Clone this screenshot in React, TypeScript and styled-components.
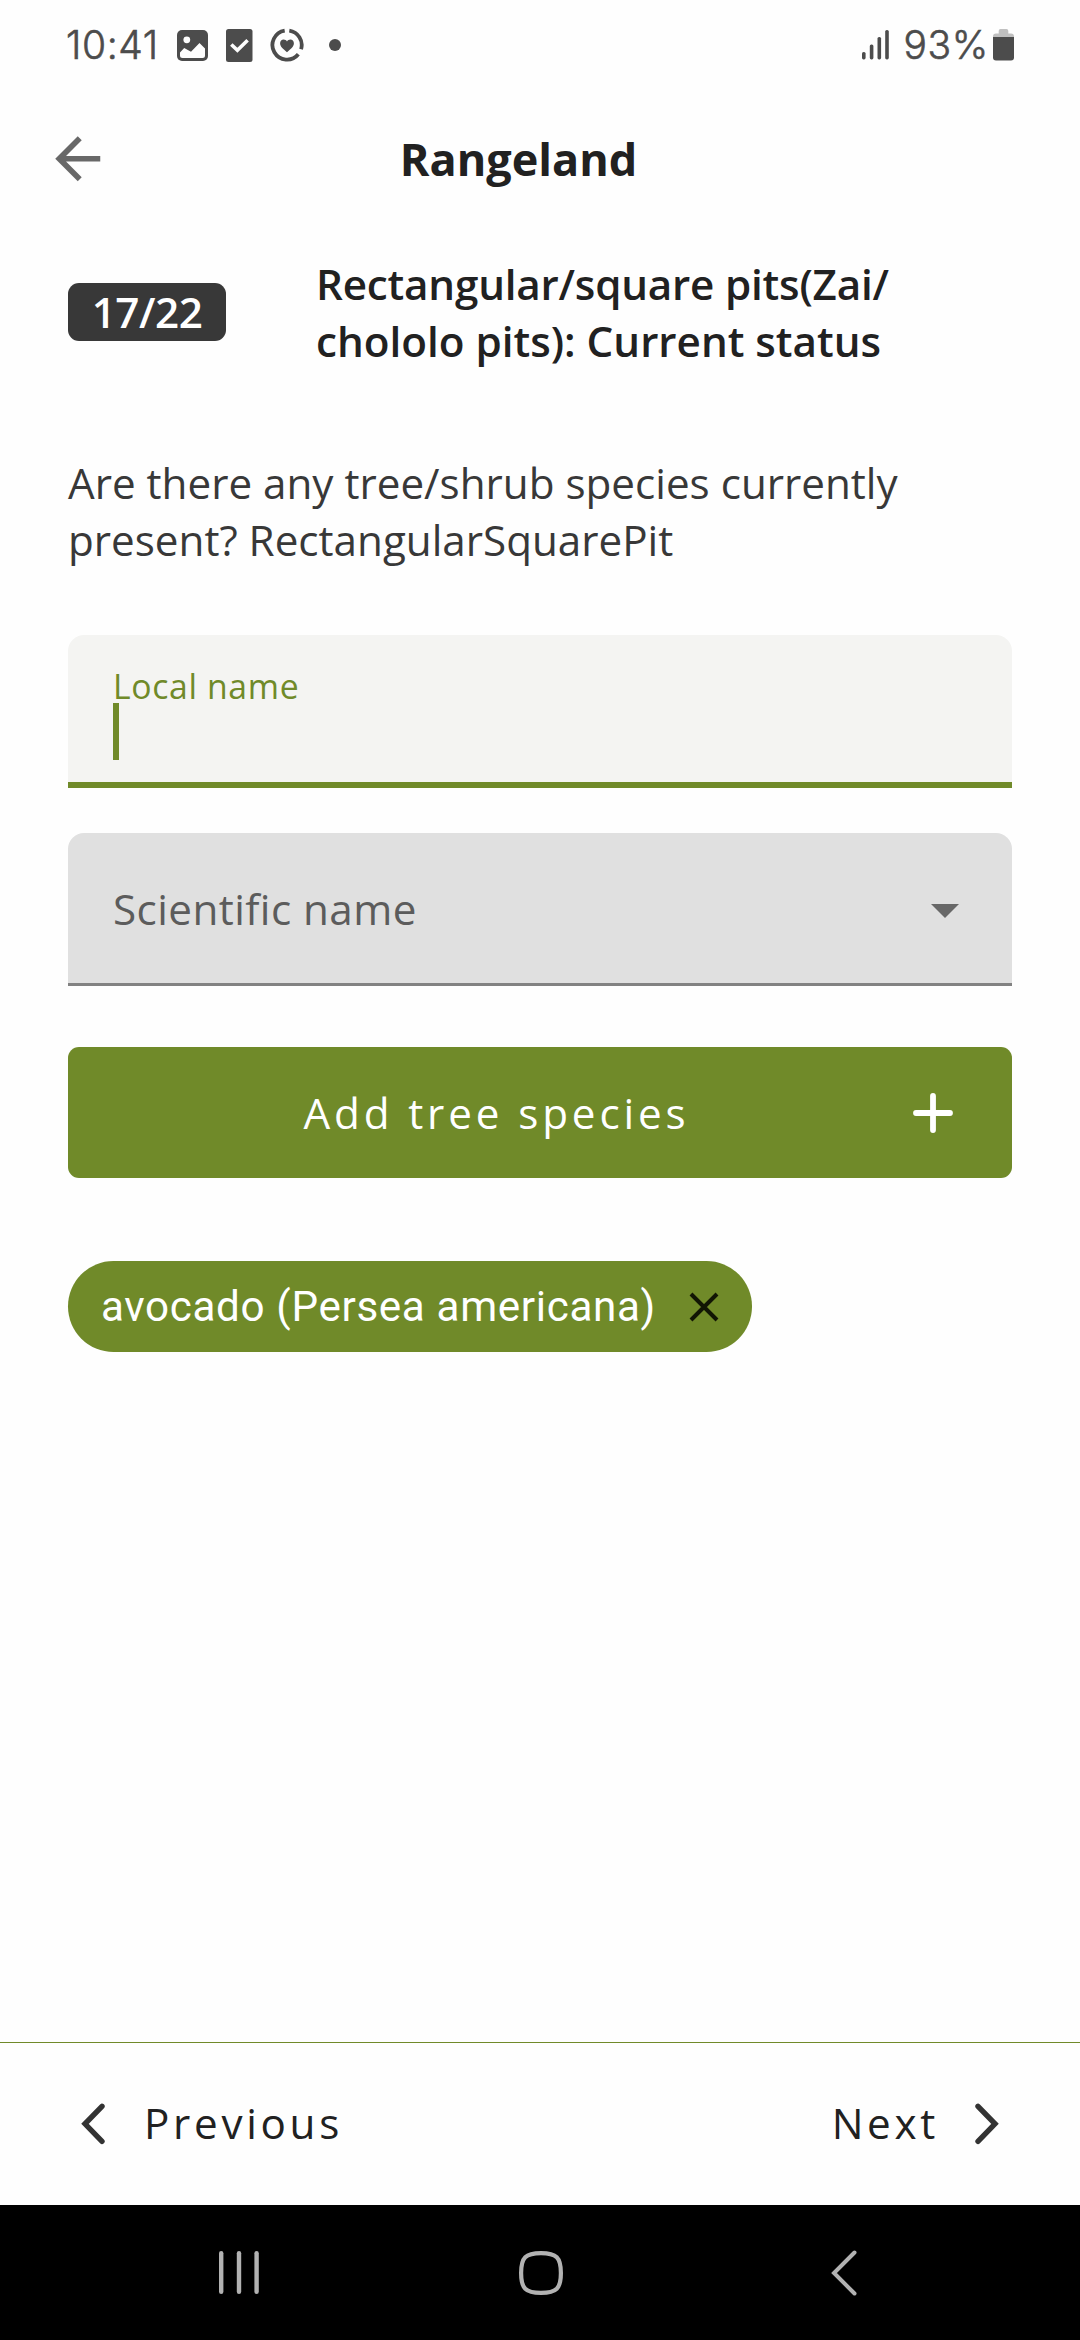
import React from 'react';
import styled, { createGlobalStyle } from 'styled-components';

const colors = {
  page: '#fefefe',
  ink: '#212121',
  body: '#383838',
  status: '#4c4c4c',
  muted: '#686868',
  green: '#708a29',
  nav: '#b2b2b2',
};

const GlobalStyle = createGlobalStyle`
  *, *::before, *::after { box-sizing: border-box; }
  html, body { margin: 0; padding: 0; background: ${colors.page}; }
  button { border: 0; padding: 0; margin: 0; background: none; font: inherit; color: inherit; }
  svg { display: block; flex: none; }
`;

const Screen = styled.div`
  display: flex;
  flex-direction: column;
  width: 1080px;
  height: 2340px;
  background: ${colors.page};
  color: ${colors.ink};
  font-family: 'Open Sans', 'Noto Sans', sans-serif;
  font-size: 42.19px;
  line-height: 57px;
`;

const StatusBar = styled.header`
  display: flex;
  align-items: center;
  justify-content: space-between;
  height: 90px;
  padding: 0 66px;
  color: ${colors.status};
`;

const StatusGroup = styled.div<{ $gap?: number }>`
  display: flex;
  align-items: center;
  gap: ${(p) => p.$gap ?? 0}px;
`;

const StatusText = styled.span<{ $width: number; $indent?: number }>`
  width: ${(p) => p.$width}px;
  padding-left: ${(p) => p.$indent ?? 0}px;
  font-family: Inter, Roboto, sans-serif;
  font-size: 39px;
  font-weight: 300;
  line-height: 48px;
  letter-spacing: 0.6px;
  white-space: nowrap;
  -webkit-text-stroke: 0.6px ${colors.status};
`;

const AppBar = styled.div`
  display: grid;
  grid-template-columns: 68px 1fr 68px;
  align-items: center;
  height: 136px;
  padding: 1px 87px 0 44px;
`;

const AppTitle = styled.h1`
  margin: 0;
  font-size: 45px;
  font-weight: 700;
  line-height: 61px;
  text-align: center;
`;

const Content = styled.main`
  display: flex;
  flex-direction: column;
  flex: 1;
  padding: 29px 68px 0;
`;

const StepRow = styled.div`
  display: flex;
  align-items: center;
  gap: 90px;
  height: 114px;
`;

const StepBadge = styled.span`
  display: flex;
  justify-content: center;
  width: 158px;
  height: 58px;
  border-radius: 11px;
  background: ${colors.body};
  color: #fff;
  font-weight: 600;
  letter-spacing: -0.45px;
`;

const StepTitle = styled.h2`
  margin: 0;
  font-size: inherit;
  font-weight: 600;
`;

const TitleLine = styled.span<{ $tracking: number }>`
  display: block;
  letter-spacing: ${(p) => p.$tracking}px;
  white-space: nowrap;
`;

const Question = styled.p`
  margin: 85px 0 67px;
  color: ${colors.body};
`;

const Field = styled.div<{ $bg: string; $line: string; $weight: number }>`
  display: flex;
  justify-content: space-between;
  height: 153px;
  padding: 0 45px;
  border-bottom: ${(p) => p.$weight}px solid ${(p) => p.$line};
  border-radius: 16px 16px 0 0;
  background: ${(p) => p.$bg};
`;

const TextField = styled(Field)`
  flex-direction: column;
  justify-content: flex-start;
  padding-top: 28px;
`;

const FloatingLabel = styled.label`
  height: 40px;
  color: ${colors.green};
  font-size: 33.75px;
  line-height: 46px;
  letter-spacing: 0.65px;
`;

const Caret = styled.i`
  width: 6px;
  height: 57px;
  background: ${colors.green};
`;

const SelectField = styled(Field)`
  align-items: center;
  margin-top: 45px;
  padding-right: 53px;
`;

const SelectLabel = styled.span`
  margin-top: 1px;
  color: #5c5c5c;
  letter-spacing: 0.43px;
`;

const DropdownArrow = styled.svg`
  margin-top: 6px;
  fill: ${colors.muted};
`;

const AddButton = styled.button`
  display: flex;
  align-items: center;
  height: 131px;
  margin-top: 61px;
  padding: 0 59px 0 0;
  border-radius: 11px;
  background: ${colors.green};
  color: #fff;
  letter-spacing: 3.87px;
`;

const AddLabel = styled.span`
  flex: 1;
  padding-left: 12px;
  text-align: center;
`;

const Chip = styled.div`
  display: flex;
  align-items: center;
  justify-content: space-between;
  align-self: flex-start;
  width: 684px;
  height: 91px;
  margin-top: 83px;
  padding: 0 33px;
  border-radius: 46px;
  background: ${colors.green};
  color: #fff;
`;

const ChipLabel = styled.span`
  font-family: Roboto, sans-serif;
  letter-spacing: 0.65px;
  white-space: nowrap;
`;

const Pager = styled.nav`
  display: flex;
  align-items: center;
  justify-content: space-between;
  height: 163px;
  padding: 0 81px;
  border-top: 1px solid ${colors.green};
`;

const PagerButton = styled.button<{ $gap: number }>`
  display: flex;
  align-items: center;
  gap: ${(p) => p.$gap}px;
  letter-spacing: 3.7px;
`;

const PagerLabel = styled.span`
  margin-bottom: 3px;
`;

const SystemNav = styled.footer`
  display: flex;
  align-items: center;
  justify-content: space-between;
  height: 135px;
  padding: 0 219px;
  background: #000;
`;

const ImageIcon = () => (
  <svg width="31" height="31" viewBox="0 0 31 31">
    <rect width="31" height="31" rx="5" fill={colors.status} />
    <circle cx="9.8" cy="9.8" r="3.4" fill={colors.page} />
    <path d="M3 22.5 7.2 18 14 21.8 22.5 13 28 18.5V25.5Q28 28 25.5 28H5.5Q3 28 3 25.5Z" fill={colors.page} />
  </svg>
);

const TaskIcon = () => (
  <svg width="27" height="33" viewBox="0 0 27 33">
    <rect width="26.5" height="33" rx="2.5" fill={colors.status} />
    <path d="M5.3 15.5 11.4 21.3 21.6 11.3" fill="none" stroke={colors.page} strokeWidth="3.6" />
  </svg>
);

const HeartRing = styled.svg`
  margin-left: -1.5px;
`;

const HeartRingIcon = () => (
  <HeartRing width="34" height="34" viewBox="-17 -17 34 34" fill="none" stroke={colors.status} strokeWidth="3.8">
    <path d="M2.3 -14.4A14.6 14.6 0 0 1 14.1 4.2" />
    <path d="M11.3 9.3A14.6 14.6 0 1 1 -2.3 -14.4" />
    <path
      d="M0 7.2C-4 3.9 -6.9 1.6 -6.9 -1.7C-6.9 -3.9 -5.3 -5.4 -3.4 -5.4C-2 -5.4 -.7 -4.7 0 -3.5C.7 -4.7 2 -5.4 3.4 -5.4C5.3 -5.4 6.9 -3.9 6.9 -1.7C6.9 1.6 4 3.9 0 7.2Z"
      fill={colors.status}
      stroke="none"
    />
  </HeartRing>
);

const MoreDot = styled.i`
  width: 12px;
  height: 12px;
  margin-left: 7.5px;
  border-radius: 50%;
  background: ${colors.status};
`;

const SignalIcon = () => (
  <svg width="27" height="30" viewBox="0 0 27 30" fill={colors.status}>
    <rect x="0" y="22" width="3.6" height="7.4" rx="1.6" />
    <rect x="7.8" y="14.5" width="3.6" height="14.9" rx="1.6" />
    <rect x="15.5" y="7" width="3.6" height="22.4" rx="1.6" />
    <rect x="23.2" y="0" width="3.6" height="29.4" rx="1.6" />
  </svg>
);

const BatteryIcon = () => (
  <svg width="21" height="32" viewBox="0 0 21 32">
    <path d="M7.5 0H13.5Q15.3 0 15.3 2V4.5H18Q21 4.5 21 7.5V9H0V7.5Q0 4.5 3 4.5H5.7V2Q5.7 0 7.5 0Z" fill="#c0c0c0" />
    <path d="M0 8H21V28.5Q21 31.5 18 31.5H3Q0 31.5 0 28.5Z" fill={colors.status} />
  </svg>
);

const BackArrow = () => (
  <svg width="67.5" height="67.5" viewBox="0 0 24 24" fill={colors.muted}>
    <path d="M20 11H7.83l5.59-5.59L12 4l-8 8 8 8 1.41-1.41L7.83 13H20v-2z" />
  </svg>
);

const PlusIcon = () => (
  <svg width="40" height="40" viewBox="0 0 40 40" stroke="#fff" strokeWidth="5.8" strokeLinecap="round">
    <path d="M20 3V37M3 20H37" />
  </svg>
);

const CrossIcon = () => (
  <svg width="30" height="30" viewBox="0 0 30 30" stroke="#111504" strokeWidth="4">
    <path d="M2 2 28 28M28 2 2 28" />
  </svg>
);

const Chevron = ({ right = false }: { right?: boolean }) => (
  <svg width="24" height="42" viewBox="0 0 24 42" fill="none" stroke="#333" strokeWidth="5.4" strokeLinecap="round">
    <path d={right ? 'M3 3.3 20 20.8 3 38.3' : 'M21 3.3 4 20.8 21 38.3'} />
  </svg>
);

const HomeIcon = styled.svg`
  margin-right: 9px;
`;

export default function App() {
  return (
    <>
      <GlobalStyle />
      <Screen>
        <StatusBar>
          <StatusGroup $gap={18}>
            <StatusText $width={93}>10:41</StatusText>
            <ImageIcon />
            <TaskIcon />
            <HeartRingIcon />
            <MoreDot />
          </StatusGroup>
          <StatusGroup>
            <SignalIcon />
            <StatusText $width={104} $indent={14.5}>93%</StatusText>
            <BatteryIcon />
          </StatusGroup>
        </StatusBar>

        <AppBar>
          <BackArrow />
          <AppTitle>Rangeland</AppTitle>
        </AppBar>

        <Content>
          <StepRow>
            <StepBadge>17/22</StepBadge>
            <StepTitle>
              <TitleLine $tracking={-0.2}>Rectangular/square pits(Zai/</TitleLine>
              <TitleLine $tracking={0}>chololo pits): Current status</TitleLine>
            </StepTitle>
          </StepRow>

          <Question>
            Are there any tree/shrub species currently
            <br />
            present? RectangularSquarePit
          </Question>

          <TextField $bg="#f4f4f2" $line={colors.green} $weight={6}>
            <FloatingLabel>Local name</FloatingLabel>
            <Caret />
          </TextField>

          <SelectField $bg="#e0e0e0" $line="#828282" $weight={3}>
            <SelectLabel>Scientific name</SelectLabel>
            <DropdownArrow width="28" height="14" viewBox="0 0 28 14">
              <path d="M0 0H28L14 14Z" />
            </DropdownArrow>
          </SelectField>

          <AddButton>
            <AddLabel>Add tree species</AddLabel>
            <PlusIcon />
          </AddButton>

          <Chip>
            <ChipLabel>avocado (Persea americana)</ChipLabel>
            <CrossIcon />
          </Chip>
        </Content>

        <Pager>
          <PagerButton $gap={39}>
            <Chevron />
            <PagerLabel>Previous</PagerLabel>
          </PagerButton>
          <PagerButton $gap={36}>
            <PagerLabel>Next</PagerLabel>
            <Chevron right />
          </PagerButton>
        </Pager>

        <SystemNav>
          <svg width="41" height="43" viewBox="0 0 41 43" fill={colors.nav}>
            <rect x="0" width="4.4" height="43" rx="2.2" />
            <rect x="17.8" width="4.4" height="43" rx="2.2" />
            <rect x="35.4" width="4.4" height="43" rx="2.2" />
          </svg>
          <HomeIcon width="44" height="44" viewBox="0 0 44 44" fill="none" stroke={colors.nav} strokeWidth="4.2">
            <path d="M22 2.1C37.5 2.1 41.9 6.5 41.9 22S37.5 41.9 22 41.9 2.1 37.5 2.1 22 6.5 2.1 22 2.1Z" />
          </HomeIcon>
          <svg width="30" height="46" viewBox="0 0 30 46" fill="none" stroke={colors.nav} strokeWidth="4" strokeLinecap="round">
            <path d="M23.5 2.5 3 23 23.5 43.5" />
          </svg>
        </SystemNav>
      </Screen>
    </>
  );
}
